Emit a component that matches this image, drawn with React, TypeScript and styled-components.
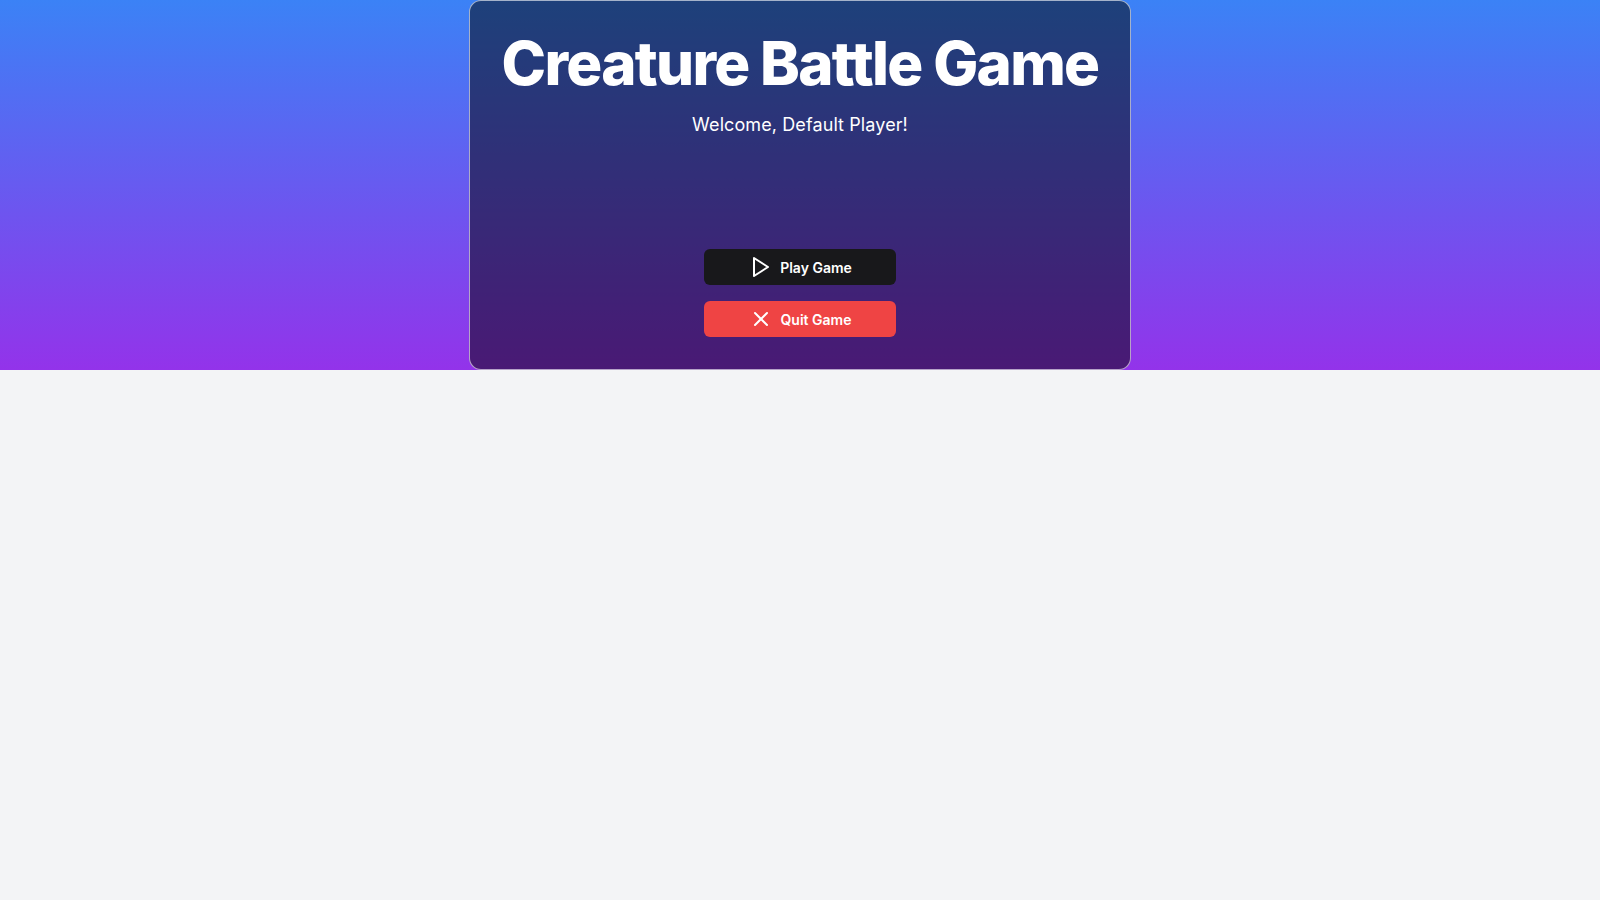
import * as React from 'react';
import styled, { createGlobalStyle } from 'styled-components';

const GlobalStyle = createGlobalStyle`
  html, body {
    margin: 0;
    padding: 0;
    background: #f3f4f6;
    font-family: Inter, "Noto Sans", "Liberation Sans", sans-serif;
  }
  * {
    box-sizing: border-box;
  }
`;

const Screen = styled.div`
  display: flex;
  justify-content: center;
  background: linear-gradient(to bottom, #3b82f6, #9333ea);
`;

const Card = styled.div`
  padding: 32px;
  border: 1px solid rgba(255, 255, 255, 0.6);
  border-radius: 12px;
  background: rgba(0, 0, 0, 0.5);
  text-align: center;
  color: #ffffff;
`;

const Title = styled.h1`
  margin: 0 0 18px;
  font-size: 60px;
  line-height: 1;
  font-weight: 800;
  letter-spacing: -1.7px;
`;

const Welcome = styled.p`
  margin: 0;
  font-size: 18px;
  line-height: 28px;
  font-weight: 400;
  letter-spacing: 0.1px;
`;

const Actions = styled.div`
  display: flex;
  flex-direction: column;
  align-items: center;
  gap: 16px;
  margin-top: 110px;
`;

const Button = styled.button<{ $variant: 'dark' | 'danger' }>`
  display: flex;
  align-items: center;
  justify-content: center;
  width: 192px;
  height: 36px;
  padding: 0 16px;
  border: none;
  border-radius: 6px;
  background: ${(p) => (p.$variant === 'danger' ? '#ef4444' : '#18181b')};
  color: #ffffff;
  font-family: inherit;
  font-size: 14px;
  font-weight: 600;
  cursor: pointer;
  svg {
    margin-right: 8px;
    flex-shrink: 0;
  }
`;

function PlayIcon() {
  return (
    <svg width="24" height="24" viewBox="0 0 24 24" fill="none" stroke="currentColor" strokeWidth="2" strokeLinecap="round" strokeLinejoin="round">
      <polygon points="6 3 20 12 6 21 6 3" />
    </svg>
  );
}

function CloseIcon() {
  return (
    <svg width="24" height="24" viewBox="0 0 24 24" fill="none" stroke="currentColor" strokeWidth="2" strokeLinecap="round" strokeLinejoin="round">
      <path d="M18 6 6 18" />
      <path d="m6 6 12 12" />
    </svg>
  );
}

export default function App() {
  return (
    <>
      <GlobalStyle />
      <Screen>
        <Card>
          <Title>Creature Battle Game</Title>
          <Welcome>Welcome, Default Player!</Welcome>
          <Actions>
            <Button $variant="dark">
              <PlayIcon />
              Play Game
            </Button>
            <Button $variant="danger">
              <CloseIcon />
              Quit Game
            </Button>
          </Actions>
        </Card>
      </Screen>
    </>
  );
}
